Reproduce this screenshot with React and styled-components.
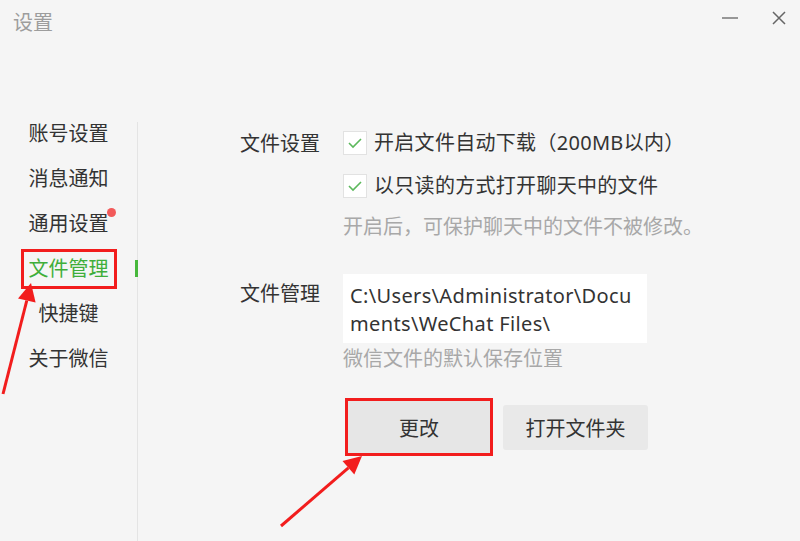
import React from "react";
import styled, { createGlobalStyle } from "styled-components";

const GlobalStyle = createGlobalStyle`
  html, body {
    margin: 0;
    padding: 0;
    background: #f5f5f5;
  }
  body {
    font-family: "Noto Sans", "Noto Sans CJK SC", sans-serif;
    color: #333;
  }
`;

const menu = ["账号设置", "消息通知", "通用设置", "文件管理", "快捷键", "关于微信"];

const App = () => {
  return (
    <Window>
      <GlobalStyle />
      <TitleBar>
        <Title>设置</Title>
        <WinButtons>
          <WinButton aria-label="最小化">
            <svg width="16" height="4" viewBox="0 0 16 4">
              <line x1="0" y1="2" x2="16" y2="2" stroke="#777" strokeWidth="1.5" />
            </svg>
          </WinButton>
          <WinButton aria-label="关闭">
            <svg width="14" height="14" viewBox="0 0 14 14">
              <path d="M1 1L13 13M13 1L1 13" stroke="#666" strokeWidth="1.5" />
            </svg>
          </WinButton>
        </WinButtons>
      </TitleBar>

      <Body>
        <Sidebar>
          {menu.map((item) => (
            <MenuItem key={item} $active={item === "文件管理"}>
              <MenuLabel $active={item === "文件管理"}>
                {item}
                {item === "通用设置" && <Dot />}
              </MenuLabel>
            </MenuItem>
          ))}
        </Sidebar>

        <Content>
          <Section>
            <Label>文件设置</Label>
            <Controls>
              <CheckRow>
                <CheckBox />
                <span>开启文件自动下载（200MB以内）</span>
              </CheckRow>
              <CheckRow>
                <CheckBox />
                <span>以只读的方式打开聊天中的文件</span>
              </CheckRow>
              <Hint>开启后，可保护聊天中的文件不被修改。</Hint>
            </Controls>
          </Section>

          <Section $spaced>
            <Label $pad>文件管理</Label>
            <Controls>
              <PathBox>C:\Users\Administrator\Documents\WeChat Files\</PathBox>
              <Hint $tight>微信文件的默认保存位置</Hint>
              <ButtonRow>
                <Button $marked>更改</Button>
                <Button>打开文件夹</Button>
              </ButtonRow>
            </Controls>
          </Section>
        </Content>
      </Body>

      <Annotations width="800" height="541" viewBox="0 0 800 541">
        <line x1="3" y1="394" x2="26.8" y2="300.5" stroke="#f21d1d" strokeWidth="3" />
        <polygon points="31,283 35.6,302.6 18,298.4" fill="#f21d1d" />
        <line x1="281" y1="526" x2="348.4" y2="467.8" stroke="#f21d1d" strokeWidth="3" />
        <polygon points="362,456 354.3,474.6 342.5,461" fill="#f21d1d" />
      </Annotations>
    </Window>
  );
};

const CheckBox = () => (
  <Box>
    <svg width="16" height="12" viewBox="0 0 16 12">
      <polyline points="2,6 6,10 14,2" fill="none" stroke="#5cb85c" strokeWidth="1.6" />
    </svg>
  </Box>
);

const Window = styled.div`
  position: relative;
  width: 800px;
  height: 541px;
  overflow: hidden;
  background: #f5f5f5;
`;

const TitleBar = styled.div`
  display: flex;
  justify-content: space-between;
  align-items: flex-start;
  height: 44px;
  padding: 11px 14px 0 13px;
  box-sizing: border-box;
`;

const Title = styled.div`
  font-size: 20px;
  line-height: 24px;
  color: #9d9d9d;
`;

const WinButtons = styled.div`
  display: flex;
  align-items: center;
  gap: 34px;
  height: 14px;
`;

const WinButton = styled.div`
  display: flex;
  align-items: center;
  justify-content: center;
`;

const Body = styled.div`
  display: flex;
  margin-top: 78px;
  height: 419px;
`;

const Sidebar = styled.div`
  width: 137px;
  border-right: 1px solid #e4e4e4;
  display: flex;
  flex-direction: column;
  gap: 21px;
`;

const MenuItem = styled.div`
  position: relative;
  display: flex;
  justify-content: center;
  font-size: 20px;
  line-height: 24px;

  &::after {
    content: "";
    display: ${(p) => (p.$active ? "block" : "none")};
    position: absolute;
    right: -1px;
    top: 3px;
    width: 3px;
    height: 17px;
    background: #47b83c;
  }
`;

const MenuLabel = styled.span`
  position: relative;
  color: ${(p) => (p.$active ? "#3fae3a" : "#333")};
  outline: ${(p) => (p.$active ? "3px solid #f21d1d" : "none")};
  outline-offset: 5px;
`;

const Dot = styled.i`
  position: absolute;
  top: -4px;
  right: -7px;
  width: 9px;
  height: 9px;
  border-radius: 50%;
  background: #f25a5a;
`;

const Content = styled.div`
  flex: 1;
  padding: 8px 0 0 102px;
`;

const Section = styled.div`
  display: grid;
  grid-template-columns: 103px 1fr;
  margin-top: ${(p) => (p.$spaced ? "35px" : "0")};
`;

const Label = styled.div`
  font-size: 20px;
  line-height: 24px;
  padding-top: ${(p) => (p.$pad ? "8px" : "2px")};
`;

const Controls = styled.div`
  display: flex;
  flex-direction: column;
  align-items: flex-start;
`;

const CheckRow = styled.div`
  display: flex;
  align-items: center;
  gap: 7px;
  height: 26px;
  font-size: 20px;
  line-height: 24px;
  letter-spacing: 0.3px;

  & + & {
    margin-top: 17px;
  }
`;

const Box = styled.span`
  display: flex;
  align-items: center;
  justify-content: center;
  width: 24px;
  height: 24px;
  box-sizing: border-box;
  background: #fff;
  border: 1px solid #e2e2e2;
`;

const Hint = styled.div`
  margin-top: ${(p) => (p.$tight ? "4px" : "16px")};
  font-size: 20px;
  line-height: 24px;
  color: #a8a8a8;
`;

const PathBox = styled.div`
  width: 304px;
  box-sizing: border-box;
  padding: 8px 10px 5px 7px;
  background: #fff;
  font-size: 20px;
  line-height: 28px;
  letter-spacing: 0.35px;
  color: #333;
  word-break: break-all;
`;

const ButtonRow = styled.div`
  display: flex;
  align-items: center;
  gap: 10px;
  margin-top: 27px;
  margin-left: 2px;
`;

const Button = styled.div`
  display: flex;
  align-items: center;
  justify-content: center;
  width: ${(p) => (p.$marked ? "148px" : "145px")};
  height: ${(p) => (p.$marked ? "58px" : "45px")};
  box-sizing: border-box;
  border: ${(p) => (p.$marked ? "3px solid #f21d1d" : "none")};
  border-radius: ${(p) => (p.$marked ? "0" : "3px")};
  background: ${(p) => (p.$marked ? "#e6e6e6" : "#e9e9e9")};
  font-size: 20px;
  color: #333;
`;

const Annotations = styled.svg`
  position: absolute;
  left: 0;
  top: 0;
  pointer-events: none;
`;

export default App;
